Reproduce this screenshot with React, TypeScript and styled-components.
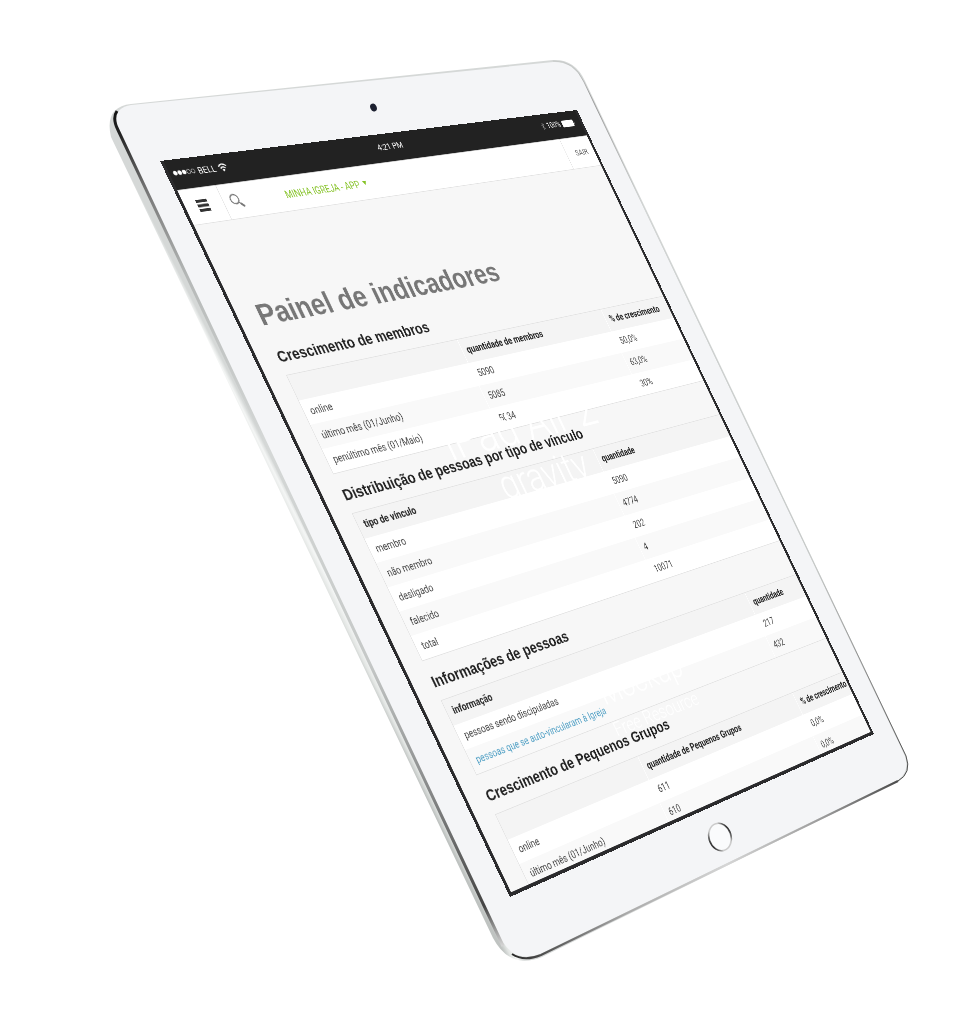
import React from 'react';
import styled, { createGlobalStyle } from 'styled-components';

const SCREEN_W = 788;
const SCREEN_H = 1050;

type Point = [number, number];

/* Perspective that carries a w × h rectangle onto four corners (TL, TR, BR, BL). */
function projection(w: number, h: number, corners: Point[]): string {
  const [[x0, y0], [x1, y1], [x2, y2], [x3, y3]] = corners;
  const dx1 = x1 - x2;
  const dx2 = x3 - x2;
  const dy1 = y1 - y2;
  const dy2 = y3 - y2;
  const sx = x0 - x1 + x2 - x3;
  const sy = y0 - y1 + y2 - y3;
  const det = dx1 * dy2 - dx2 * dy1;
  const g = (sx * dy2 - dx2 * sy) / det;
  const k = (dx1 * sy - sx * dy1) / det;
  const m = [
    (x1 - x0 + g * x1) / w, (y1 - y0 + g * y1) / w, 0, g / w,
    (x3 - x0 + k * x3) / h, (y3 - y0 + k * y3) / h, 0, k / h,
    0, 0, 1, 0,
    x0, y0, 0, 1,
  ];
  return `matrix3d(${m.join(',')})`;
}

const SCREEN_TRANSFORM = projection(SCREEN_W, SCREEN_H, [
  [160, 161],
  [577, 110],
  [874, 734],
  [510, 897],
]);

const GlobalStyle = createGlobalStyle`
  body {
    margin: 0;
    background: #fff;
    font-family: Roboto, 'Liberation Sans', sans-serif;
  }
`;

const Page = styled.main`
  min-height: 100vh;
  display: flex;
  justify-content: center;
  overflow: hidden;
`;

const Stage = styled.div`
  position: relative;
  flex: none;
  width: 970px;
  height: 1022px;
`;

const Shell = styled.svg`
  display: block;
  width: 100%;
  height: 100%;
`;

const Screen = styled.div`
  position: absolute;
  top: 0;
  left: 0;
  width: ${SCREEN_W}px;
  height: ${SCREEN_H}px;
  transform-origin: 0 0;
  transform: ${SCREEN_TRANSFORM};
  overflow: hidden;
  background: #f7f7f7;
  color: #333;

  &::after {
    content: '';
    position: absolute;
    inset: 0;
    border: 5px solid #2b2b2d;
    border-top-width: 0;
    pointer-events: none;
  }
`;

const StatusBar = styled.header`
  display: grid;
  grid-template-columns: 1fr auto 1fr;
  align-items: center;
  box-sizing: border-box;
  height: 42px;
  padding: 0 17px 4px 11px;
  background: #222;
  color: #fff;
  font-size: 13px;
  font-weight: 400;
`;

const StatusGroup = styled.div<{ $end?: boolean }>`
  display: flex;
  align-items: center;
  gap: 4px;
  justify-content: ${(p) => (p.$end ? 'flex-end' : 'flex-start')};
  font-size: ${(p) => (p.$end ? '12px' : '13px')};
`;

const Nav = styled.nav`
  display: flex;
  align-items: stretch;
  height: 49px;
  border-top: 1px solid #ccc;
  border-bottom: 1px solid #e2e2e2;
  background: #fff;
`;

const IconButton = styled.button<{ $width: number; $divided?: boolean }>`
  width: ${(p) => p.$width}px;
  padding: 0;
  display: flex;
  align-items: center;
  justify-content: center;
  border: 0;
  border-right: ${(p) => (p.$divided ? '1px solid #e2e2e2' : '0')};
  background: none;
`;

const AppPicker = styled.label`
  flex: 1;
  display: flex;
  align-items: center;
  gap: 4px;
  padding: 2px 0 0 62px;
`;

const AppSelect = styled.select`
  appearance: none;
  width: 136px;
  padding: 0;
  border: 0;
  background: none;
  color: #84c225;
  font: 400 14px Roboto, 'Liberation Sans', sans-serif;
`;

const ExitLink = styled.a`
  display: flex;
  align-items: center;
  justify-content: center;
  width: 65px;
  border-left: 1px solid #e2e2e2;
  color: #666;
  font-size: 13px;
  text-decoration: none;
`;

const Content = styled.section`
  padding: 108px 0 0 37px;
  font-family: 'Liberation Sans', Arial, sans-serif;
`;

const Title = styled.h1`
  margin: 0 0 23px;
  color: #777;
  font-size: 43px;
  line-height: 50px;
`;

const Heading = styled.h2`
  margin: 18px 0 12px;
  color: #222;
  font-size: 22px;
  line-height: 26px;
`;

const Table = styled.table`
  box-sizing: border-box;
  width: 780px;
  table-layout: fixed;
  border: 1px solid #e2e2e2;
  border-spacing: 0;
  background: #fff;
  font-family: Roboto, 'Liberation Sans', sans-serif;
  font-size: 14px;
  line-height: 17px;
`;

const Row = styled.tr`
  background: #fff;

  &:nth-child(even) {
    background: #f9f9f9;
  }
`;

const HeadCell = styled.th`
  height: 36px;
  box-sizing: border-box;
  padding: 9px 8px 10px 10px;
  background: #f4f4f4;
  color: #222;
  text-align: left;

  & + & {
    padding-left: 8px;
    border-left: 1px solid #fff;
  }
`;

const Cell = styled.td`
  height: 35px;
  box-sizing: border-box;
  padding: 9px 8px 9px 10px;
  color: #444;

  & + & {
    padding-left: 8px;
    border-left: 1px solid #fff;
  }
`;

const CellLink = styled.a`
  color: #4f9fc4;
  text-decoration: none;
`;

const Watermark = styled.p<{ $x: number; $baseline: number; $size: number }>`
  position: absolute;
  left: ${(p) => p.$x}px;
  top: ${(p) => p.$baseline - p.$size}px;
  margin: 0;
  color: #fff;
  font-size: ${(p) => p.$size}px;
  font-weight: 300;
  line-height: ${(p) => p.$size + 14}px;
  white-space: nowrap;
  pointer-events: none;
`;

interface TableData {
  title: string;
  cols: number[];
  head: string[];
  rows: string[][];
  linkRow?: number;
}

const TABLES: TableData[] = [
  {
    title: 'Crescimento de membros',
    cols: [308, 296],
    head: ['', 'quantidade de membros', '% de crescimento'],
    rows: [
      ['online', '5090', '50,0%'],
      ['último mês (01/Junho)', '5085', '63,0%'],
      ['penúltimo mês (01/Maio)', '5034', '30%'],
    ],
  },
  {
    title: 'Distribuição de pessoas por tipo de vínculo',
    cols: [460],
    head: ['tipo de vínculo', 'quantidade'],
    rows: [
      ['membro', '5090'],
      ['não membro', '4774'],
      ['desligado', '202'],
      ['falecido', '4'],
      ['total', '10071'],
    ],
  },
  {
    title: 'Informações de pessoas',
    cols: [622],
    head: ['informação', 'quantidade'],
    rows: [
      ['pessoas sendo discipuladas', '217'],
      ['pessoas que se auto-vincularam à Igreja', '432'],
    ],
    linkRow: 1,
  },
  {
    title: 'Crescimento de Pequenos Grupos',
    cols: [277, 345],
    head: ['', 'quantidade de Pequenos Grupos', '% de crescimento'],
    rows: [
      ['online', '611', '0,0%'],
      ['último mês (01/Junho)', '610', '0,0%'],
    ],
  },
];

function Indicator({ data }: { data: TableData }) {
  return (
    <>
      <Heading>{data.title}</Heading>
      <Table aria-label={data.title}>
        <colgroup>
          {data.cols.map((w, i) => (
            <col key={i} width={w} />
          ))}
          <col />
        </colgroup>
        <thead>
          <tr>
            {data.head.map((h, i) => (
              <HeadCell key={i} scope="col">{h}</HeadCell>
            ))}
          </tr>
        </thead>
        <tbody>
          {data.rows.map((row, r) => (
            <Row key={r}>
              {row.map((text, i) => (
                <Cell key={i}>
                  {i === 0 && data.linkRow === r ? <CellLink href="#">{text}</CellLink> : text}
                </Cell>
              ))}
            </Row>
          ))}
        </tbody>
      </Table>
    </>
  );
}

function Tablet() {
  return (
    <Shell viewBox="0 0 970 1022" aria-hidden="true">
      <defs>
        <linearGradient id="side" gradientUnits="userSpaceOnUse" x1="296" y1="537" x2="308" y2="531">
          <stop offset="0" stopColor="#bfc3c1" />
          <stop offset="0.35" stopColor="#e3e6e4" />
          <stop offset="0.7" stopColor="#f4f6f5" />
          <stop offset="1" stopColor="#d5d8d7" />
        </linearGradient>
        <linearGradient id="leftEdge" gradientUnits="userSpaceOnUse" x1="0" y1="108" x2="0" y2="948">
          <stop offset="0" stopColor="#111" />
          <stop offset="0.03" stopColor="#222" />
          <stop offset="0.1" stopColor="#777" />
          <stop offset="0.2" stopColor="#b5b8b7" />
          <stop offset="0.4" stopColor="#d5d8d7" />
          <stop offset="0.66" stopColor="#c5c8c7" />
          <stop offset="0.8" stopColor="#8c8e8e" />
          <stop offset="0.95" stopColor="#444" />
          <stop offset="1" stopColor="#ddd" />
        </linearGradient>
        <linearGradient id="bottomEdge" gradientUnits="userSpaceOnUse" x1="508" y1="0" x2="905" y2="0">
          <stop offset="0" stopColor="#222" />
          <stop offset="0.1" stopColor="#555" />
          <stop offset="0.3" stopColor="#aaa" />
          <stop offset="0.55" stopColor="#d5d5d5" />
          <stop offset="0.8" stopColor="#999" />
          <stop offset="1" stopColor="#444" />
        </linearGradient>
        <linearGradient id="rightEdge" gradientUnits="userSpaceOnUse" x1="0" y1="60" x2="0" y2="782">
          <stop offset="0" stopColor="#c9cccb" />
          <stop offset="0.06" stopColor="#999" />
          <stop offset="0.2" stopColor="#d0d3d2" />
          <stop offset="0.7" stopColor="#c5c8c7" />
          <stop offset="0.85" stopColor="#888" />
          <stop offset="1" stopColor="#444" />
        </linearGradient>
        <linearGradient id="homeRing" gradientUnits="userSpaceOnUse" x1="709" y1="840" x2="731" y2="832">
          <stop offset="0" stopColor="#333" />
          <stop offset="0.25" stopColor="#ccc" />
          <stop offset="0.75" stopColor="#ccc" />
          <stop offset="1" stopColor="#222" />
        </linearGradient>
      </defs>
      <path
        fill="url(#side)"
        d="M131 104 L553 60 Q575 59 585 81 L906 755 Q912 773 899 781 L542 957 Q510 970 493 938 L111 137 Q104 107 131 104 Z"
      />
      <path
        fill="#f4f5f7"
        d="M131 105 L553 62 Q573 61 584 82 L905 756 Q910 772 898 780 L540 954 Q516 963 503 942 L118 130 Q111 108 131 105 Z"
      />
      <path fill="none" stroke="url(#leftEdge)" strokeWidth="3" d="M117 111 Q112 118 118 130 L503 946" />
      <path fill="none" stroke="url(#bottomEdge)" strokeWidth="2" d="M512 954 Q524 962 541 955 L898 781" />
      <path
        fill="none"
        stroke="url(#rightEdge)"
        strokeWidth="1"
        d="M553 61 Q574 60 584 82 L906 756 Q912 773 898 781"
      />
      <ellipse cx="373.5" cy="107.5" rx="3.2" ry="4" transform="rotate(-25 373.5 107.5)" fill="#1c2030" />
      <ellipse
        cx="720"
        cy="837"
        rx="11"
        ry="14"
        transform="rotate(-18 720 837)"
        fill="#fafbfc"
        stroke="url(#homeRing)"
        strokeWidth="1.6"
      />
    </Shell>
  );
}

export default function App() {
  return (
    <Page>
      <GlobalStyle />
      <Stage>
        <Tablet />
        <Screen>
          <StatusBar>
            <StatusGroup>
              <svg width="36" height="8" viewBox="0 0 36 8" fill="#fff" stroke="#fff" strokeWidth="0.7">
                <circle cx="3.5" cy="4" r="2.9" />
                <circle cx="10.7" cy="4" r="2.9" />
                <circle cx="17.9" cy="4" r="2.9" />
                <circle cx="25.1" cy="4" r="2.9" fill="none" />
                <circle cx="32.3" cy="4" r="2.9" fill="none" />
              </svg>
              <span>BELL</span>
              <svg width="15" height="13" viewBox="0 0 15 13" fill="none" stroke="#fff" strokeWidth="1.7">
                <path d="M1 4.6 Q7.5 -1.6 14 4.6" />
                <path d="M3.4 7.6 Q7.5 3.6 11.6 7.6" />
                <path d="M5.3 9.8 Q7.5 7.8 9.7 9.8 L7.5 12.4 Z" fill="#fff" stroke="none" />
              </svg>
            </StatusGroup>
            <span>4:21 PM</span>
            <StatusGroup $end>
              <svg width="8" height="13" viewBox="0 0 8 13" fill="none" stroke="#999" strokeWidth="1">
                <path d="M1 3.5 L7 9 L4 12 V1 L7 4 L1 9.5" />
              </svg>
              <span>100%</span>
              <svg width="28" height="11" viewBox="0 0 28 11" fill="#fff">
                <rect width="25" height="11" rx="2" />
                <path d="M26 3.5 Q28 5.5 26 7.5 Z" />
              </svg>
            </StatusGroup>
          </StatusBar>
          <Nav>
            <IconButton $width={68} $divided aria-label="Menu">
              <svg width="18" height="17" viewBox="0 0 18 17" fill="#333">
                <rect width="18" height="4" />
                <rect y="6.5" width="18" height="4" />
                <rect y="13" width="18" height="4" />
              </svg>
            </IconButton>
            <IconButton $width={42} aria-label="Buscar">
              <svg width="21" height="21" viewBox="0 0 21 21" fill="none" stroke="#777">
                <circle cx="8" cy="8" r="6.6" strokeWidth="1.8" />
                <path d="M13 13 L15 15" strokeWidth="1.6" />
                <path d="M14.6 14.6 L19.6 19.6" strokeWidth="3.4" />
              </svg>
            </IconButton>
            <AppPicker>
              <AppSelect aria-label="Aplicativo" defaultValue="app">
                <option value="app">MINHA IGREJA - APP</option>
              </AppSelect>
              <svg width="7" height="7" viewBox="0 0 7 7" fill="#84c225">
                <path d="M0 0 H7 L3.5 6 Z" />
              </svg>
            </AppPicker>
            <ExitLink href="#">SAIR</ExitLink>
          </Nav>
          <Content>
            <Title>Painel de indicadores</Title>
            {TABLES.map((t) => (
              <Indicator key={t.title} data={t} />
            ))}
          </Content>
          <Watermark $x={238} $baseline={482} $size={72}>iPad Air 2</Watermark>
          <Watermark $x={300} $baseline={552} $size={60}>gravity</Watermark>
          <Watermark $x={301} $baseline={864} $size={48}>Mockup</Watermark>
          <Watermark $x={297} $baseline={907} $size={28}>Free Resource</Watermark>
        </Screen>
      </Stage>
    </Page>
  );
}
